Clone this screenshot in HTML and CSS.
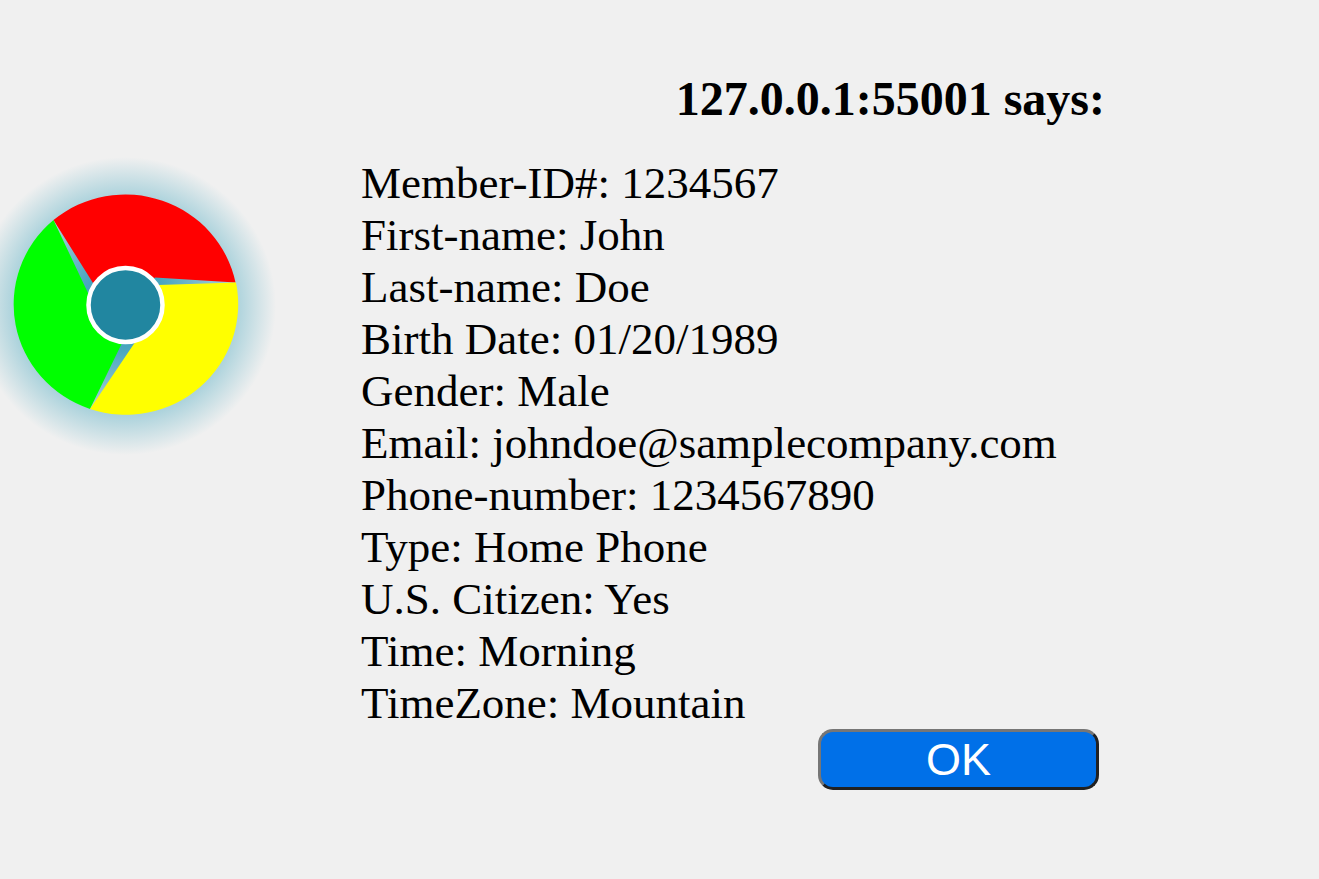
FILE: index.html
```html
<!DOCTYPE html>
<html lang="en">
<head>
<meta charset="utf-8">
<title>Member details</title>
<link rel="stylesheet" href="styles.css">
</head>
<body>
<main class="dialog">
  <svg class="logo" viewBox="-30 150 310 310" aria-hidden="true">
    <defs>
      <radialGradient id="glow">
        <stop offset="0" stop-color="#2093b3"/>
        <stop offset="0.3" stop-color="#4ca6bf"/>
        <stop offset="0.75" stop-color="#afd4dd"/>
        <stop offset="1" stop-color="#f0f0f0"/>
      </radialGradient>
    </defs>
    <ellipse cx="125" cy="306" rx="151" ry="149" fill="url(#glow)"/>
    <path d="M53.500 220A112.500 110.500 0 0 1 235.500 282.500L155 277.500L125 305L93 283Z" fill="#f00"/>
    <path d="M53.500 220A112.500 110.500 0 0 0 90 409L122 343L125 305L88 293Z" fill="#0f0"/>
    <path d="M236 282.500A112.500 110.500 0 0 1 90 409L134.500 343L125 305L158 285Z" fill="#ff0"/>
    <circle cx="125.500" cy="305" r="37" fill="#2186a0" stroke="#fff" stroke-width="4.500"/>
  </svg>
  <section class="content">
    <h1 class="title">127.0.0.1:55001 says:</h1>
    <p class="details">Member-ID#: 1234567<br>First-name: John<br>Last-name: Doe<br>Birth Date: 01/20/1989<br>Gender: Male<br>Email: johndoe@samplecompany.com<br>Phone-number: 1234567890<br>Type: Home Phone<br>U.S. Citizen: Yes<br>Time: Morning<br>TimeZone: Mountain</p>
    <button class="ok" type="button">OK</button>
  </section>
</main>
</body>
</html>
```
FILE: styles.css
```css
body {
  margin: 0;
  background: #f0f0f0;
  color: #000;
  font-family: "Liberation Serif", "Times New Roman", serif;
  overflow-x: hidden;
}

.dialog {
  display: flex;
  align-items: flex-start;
  padding: 71px 214px 71px 0;
}

.logo {
  flex: none;
  width: 310px;
  height: 310px;
  margin: 79px 81px 0 -30px;
}

.content {
  flex: 1;
  display: flex;
  flex-direction: column;
}

.title {
  align-self: flex-end;
  margin: 0 0 31px;
  font-size: 48px;
  line-height: 55px;
}

.details {
  margin: 0;
  font-size: 45px;
  line-height: 52px;
}

.ok {
  align-self: flex-end;
  width: 281px;
  margin: 0 6px 0 0;
  padding: 2px 0;
  border: 3px solid;
  border-color: #767676 #212121 #212121 #767676;
  border-radius: 15px;
  background: #0070e8;
  color: #fff;
  font-family: "Liberation Sans", Arial, sans-serif;
  font-size: 45px;
  line-height: 51px;
}
```
